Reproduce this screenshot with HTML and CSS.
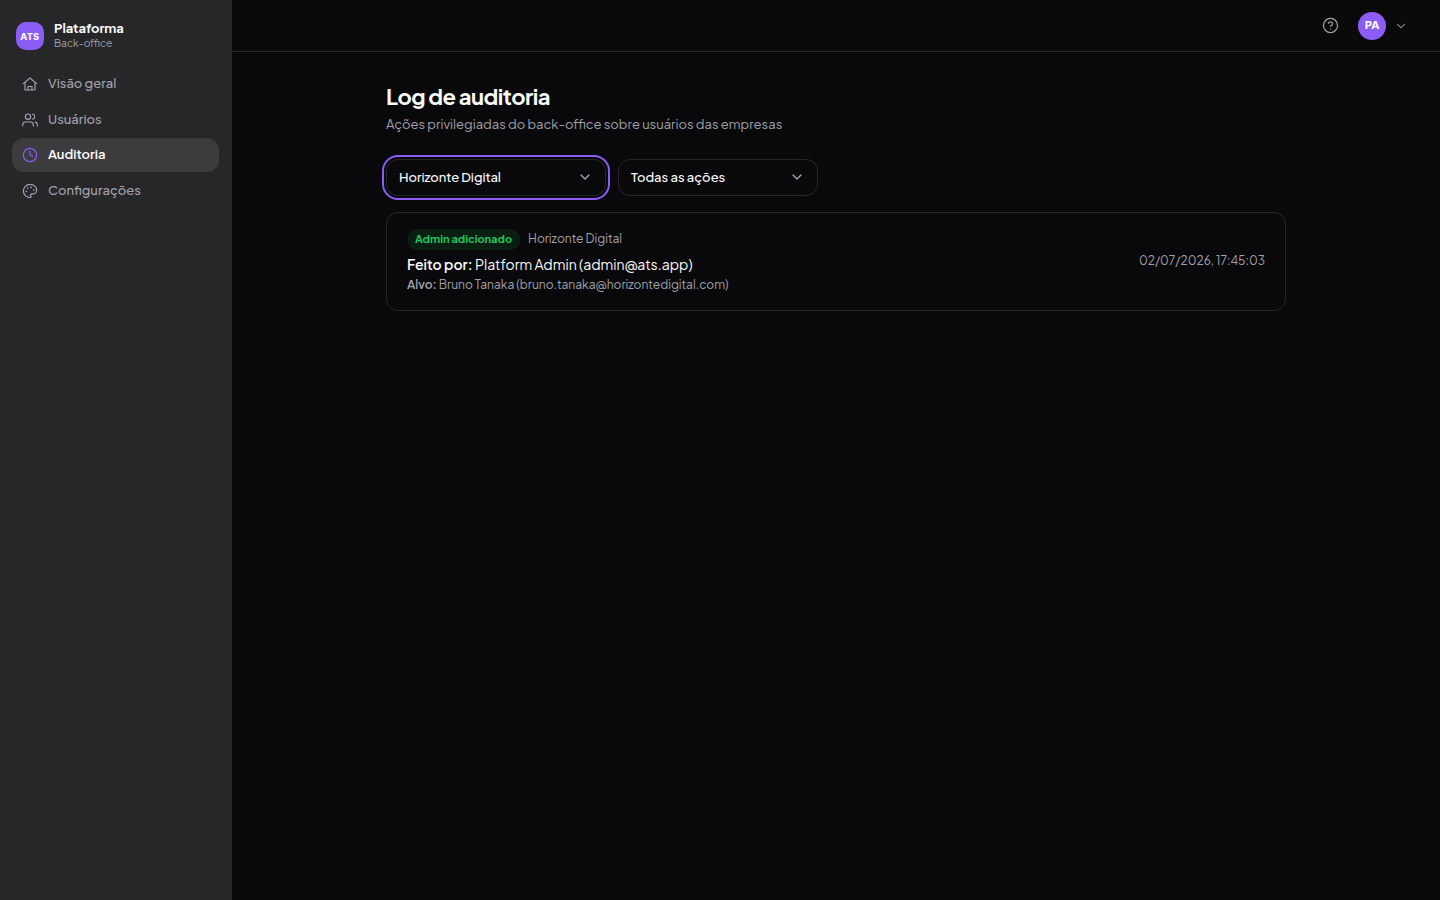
FILE: index.html
```html
<!DOCTYPE html>
<html lang="pt-BR">
<head>
<meta charset="utf-8">
<title>Log de auditoria</title>
<link rel="stylesheet" href="styles.css">
</head>
<body>
<div class="app">
  <aside class="sidebar">
    <div class="brand">
      <div class="logo">ATS</div>
      <div class="brand-text">
        <span class="brand-name">Plataforma</span>
        <span class="brand-sub">Back-office</span>
      </div>
    </div>
    <nav class="nav">
      <a class="nav-item"><svg class="icon" viewBox="0 0 24 24"><path d="M2 11.500 12 3l10 8.500"/><path d="M4.500 9.700V21h15V9.700"/><path d="M9 21v-5.250h6V21"/></svg><span>Visão geral</span></a>
      <a class="nav-item"><svg class="icon" viewBox="0 0 24 24"><path d="M17 21v-2a4 4 0 0 0-4-4H5a4 4 0 0 0-4 4v2"/><circle cx="9" cy="7" r="4"/><path d="M23 21v-2a4 4 0 0 0-3-3.870"/><path d="M16 3.130a4 4 0 0 1 0 7.750"/></svg><span>Usuários</span></a>
      <a class="nav-item active"><svg class="icon" viewBox="0 0 24 24"><circle cx="12" cy="12" r="10"/><path d="M12 6v6l4 2"/></svg><span>Auditoria</span></a>
      <a class="nav-item"><svg class="icon" viewBox="0 0 24 24"><path d="M12 2C6.500 2 2 6.500 2 12s4.500 10 10 10c.926 0 1.648-.746 1.648-1.688 0-.437-.18-.835-.437-1.125-.29-.289-.438-.652-.438-1.125a1.640 1.640 0 0 1 1.668-1.668h1.996c3.051 0 5.555-2.503 5.555-5.554C21.965 6.012 17.461 2 12 2z"/><circle class="dot" cx="13.500" cy="6.500" r="1.300"/><circle class="dot" cx="17.500" cy="10.500" r="1.300"/><circle class="dot" cx="8.500" cy="7.500" r="1.300"/><circle class="dot" cx="6.500" cy="12.500" r="1.300"/></svg><span>Configurações</span></a>
    </nav>
  </aside>
  <div class="page">
    <header class="topbar">
      <svg class="help" viewBox="0 0 24 24"><circle cx="12" cy="12" r="10"/><path d="M9.090 9a3 3 0 0 1 5.830 1c0 2-3 3-3 3"/><path d="M12 17h.01"/></svg>
      <div class="avatar">PA</div>
      <svg class="caret" viewBox="0 0 24 24"><path d="m6 9 6 6 6-6"/></svg>
    </header>
    <main class="content">
      <h1 class="title">Log de auditoria</h1>
      <p class="subtitle">Ações privilegiadas do back-office sobre usuários das empresas</p>
      <div class="filters">
        <div class="select company focused"><span>Horizonte Digital</span><svg class="chevron" viewBox="0 0 24 24"><path d="m6 9 6 6 6-6"/></svg></div>
        <div class="select actions"><span>Todas as ações</span><svg class="chevron" viewBox="0 0 24 24"><path d="m6 9 6 6 6-6"/></svg></div>
      </div>
      <article class="entry">
        <div class="entry-body">
          <div class="entry-head"><span class="badge">Admin adicionado</span><span class="org">Horizonte Digital</span></div>
          <div class="actor"><b>Feito por:</b> Platform Admin (admin@ats.app)</div>
          <div class="target"><b>Alvo:</b> Bruno Tanaka (bruno.tanaka@horizontedigital.com)</div>
        </div>
        <time class="date">02/07/2026, 17:45:03</time>
      </article>
    </main>
  </div>
</div>
</body>
</html>
```
FILE: styles.css
```css
* { box-sizing: border-box; }
body {
  margin: 0;
  background: #09090b;
  color: #fafafa;
  font-family: "Plus Jakarta Sans", Inter, sans-serif;
  font-size: 13px;
}
svg { fill: none; stroke: currentColor; stroke-width: 1.75; stroke-linecap: round; stroke-linejoin: round; flex: none; }
span, .title, .subtitle, .actor, .target, .date { white-space: nowrap; }
b { font-weight: 600; }

.app { display: flex; height: 100vh; overflow: hidden; }

.sidebar { width: 232px; flex: none; background: #27272a; padding: 20px 13px 0 12px; }
.brand { display: flex; align-items: center; gap: 10px; height: 30px; padding-left: 4px; }
.logo {
  display: flex; align-items: center; justify-content: center;
  width: 28px; height: 28px; margin-top: 2px; padding-bottom: 1px; border-radius: 10px;
  background: #8b5cf6; color: #fff; font-size: 9.5px; font-weight: 800; letter-spacing: 0.5px; line-height: 12px;
}
.brand-text { display: flex; flex-direction: column; }
.brand-name { font-size: 13px; font-weight: 700; line-height: 17px; }
.brand-sub { margin-top: -1px; font-size: 10.2px; line-height: 13px; color: #a1a1aa; padding-bottom: 1px; }

.nav { display: flex; flex-direction: column; gap: 1.5px; margin-top: 17px; }
.nav-item { display: flex; align-items: center; gap: 10px; height: 34px; padding: 0 10px; border-radius: 12px; color: #a1a1aa; font-size: 13px; font-weight: 500; }
.nav-item span { line-height: 20px; padding-bottom: 2px; }
.nav-item.active { background: #3c3c3f; color: #fff; font-weight: 600; }
.active .icon { color: #8b5cf6; }
.icon { width: 16px; height: 16px; }
.dot { fill: currentColor; stroke: none; }

.page { flex: 1; display: flex; flex-direction: column; min-width: 0; }
.topbar { display: flex; align-items: center; justify-content: flex-end; height: 52px; padding-right: 32px; background: #0a0a0a; border-bottom: 1px solid #27272a; }
.help { width: 17px; height: 17px; color: #a1a1aa; margin-right: 19px; }
.avatar { display: flex; align-items: center; justify-content: center; width: 28px; height: 28px; padding-bottom: 2px; border-radius: 50%; background: #8b5cf6; color: #fff; font-size: 11px; font-weight: 800; margin-right: 8px; }
.caret { width: 14px; height: 14px; color: #a1a1aa; }

.content { width: 900px; margin: 0 auto; padding-top: 31px; }
.title { margin: 0; font-size: 22px; font-weight: 700; line-height: 26px; letter-spacing: -0.55px; }
.subtitle { margin: 5px 0 0; font-size: 13px; line-height: 20px; color: #a1a1aa; }
.filters { display: flex; gap: 12px; margin-top: 25px; }
.select { display: flex; align-items: center; justify-content: space-between; height: 37px; padding: 0 12px 1px; border: 1px solid #27272a; border-radius: 12px; font-size: 13px; font-weight: 500; }
.select span { line-height: 18px; padding-bottom: 1px; }
.company { width: 220px; letter-spacing: -0.06px; }
.actions { width: 200px; }
.focused { outline: 2px solid #8b5cf6; outline-offset: 2px; }
.chevron { width: 16px; height: 16px; color: #a1a1aa; stroke-width: 2; }

.entry { display: flex; align-items: center; justify-content: space-between; height: 99px; margin-top: 16px; padding: 0 20px; border: 1px solid #27272a; border-radius: 12px; }
.entry-head { display: flex; align-items: center; gap: 8px; height: 21px; margin-bottom: 3px; }
.badge { height: 21px; padding: 0 8px; border-radius: 11px; background: #0b1e12; color: #22c55e; font-size: 11px; font-weight: 700; line-height: 19px; }
.org { font-size: 12px; line-height: 20px; padding-bottom: 2px; color: #a1a1aa; }
.actor { font-size: 14px; line-height: 22px; padding-bottom: 1px; }
.target { font-size: 12px; line-height: 18px; color: #a1a1aa; }
.date { font-size: 12px; line-height: 18px; padding-bottom: 2px; color: #a1a1aa; }
```
